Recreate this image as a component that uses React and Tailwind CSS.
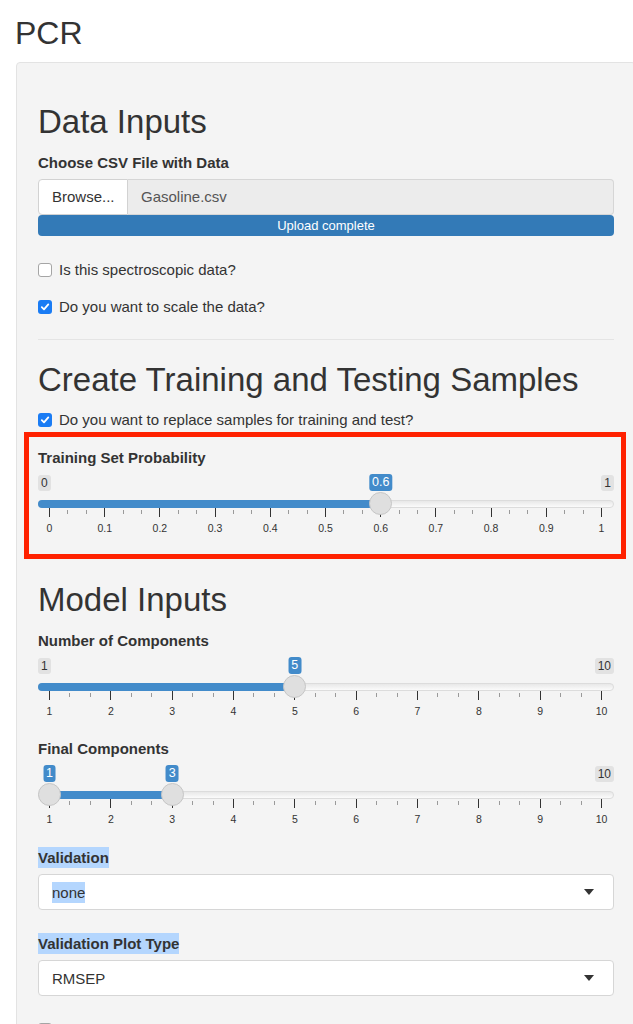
import React from 'react';

const probTicks = [0, 0.1, 0.2, 0.3, 0.4, 0.5, 0.6, 0.7, 0.8, 0.9, 1];
const compTicks = [1, 2, 3, 4, 5, 6, 7, 8, 9, 10];

const Checkbox = ({ checked, label }) => (
    <div className="flex items-start gap-[7px] h-[20px] leading-[20px] text-[15px]">
        {checked ? (
            <span className="mt-[3px] w-[14px] h-[14px] rounded-[3px] bg-[#1a7cf4] flex items-center justify-center shrink-0">
                <svg width="10" height="10" viewBox="0 0 10 10">
                    <path d="M1.8 5.2 L4 7.4 L8.3 2.4" fill="none" stroke="white" strokeWidth="1.8" strokeLinecap="round" strokeLinejoin="round" />
                </svg>
            </span>
        ) : (
            <span className="mt-[3px] w-[14px] h-[14px] rounded-[3px] bg-white border border-[#a5a5a5] shrink-0"></span>
        )}
        <span>{label}</span>
    </div>
);

const Label = ({ children, className = '' }) => (
    <div className={`font-bold text-[15px] leading-[20px] ${className}`}>{children}</div>
);

const Slider = ({ min, max, ticks, from, to, showMin = true, fmt = v => String(v) }) => {
    const pos = v => 11 + ((v - min) / (max - min)) * 552;
    const single = to === undefined;
    const fillStart = single ? 0 : pos(from);
    const fillEnd = single ? pos(from) : pos(to);
    const handles = single ? [from] : [from, to];

    const minors = [];
    for (let i = 0; i < ticks.length - 1; i++) {
        const a = pos(ticks[i]);
        const b = pos(ticks[i + 1]);
        minors.push(a + (b - a) / 3, a + (2 * (b - a)) / 3);
    }

    return (
        <div className="relative h-[60px] w-full">
            {showMin && (
                <span className="absolute left-0 top-0 h-[16px] px-[3px] rounded-[3px] bg-[#e2e2e2] text-[12px] leading-[16px] text-[#333]">
                    {fmt(min)}
                </span>
            )}
            <span className="absolute right-0 top-0 h-[16px] px-[3px] rounded-[3px] bg-[#e2e2e2] text-[12px] leading-[16px] text-[#333]">
                {fmt(max)}
            </span>

            {/* track */}
            <div className="absolute left-0 right-0 top-[25px] h-[8px] rounded-full border border-[#dcdcdc] bg-gradient-to-b from-[#e8e8e8] to-[#fbfbfb]"></div>
            <div
                className="absolute top-[25px] h-[8px] rounded-full bg-[#428bca]"
                style={{ left: fillStart, width: fillEnd - fillStart }}
            ></div>

            {/* grid */}
            {minors.map((x, i) => (
                <div key={'m' + i} className="absolute top-[35px] h-[4px] w-px bg-[#9a9a9a]" style={{ left: x }}></div>
            ))}
            {ticks.map(t => (
                <div key={'t' + t} className="absolute top-[33px] h-[9px] w-px bg-[#333]" style={{ left: pos(t) }}></div>
            ))}
            {ticks.map(t => (
                <span
                    key={'l' + t}
                    className="absolute top-[46px] w-[30px] -ml-[15px] text-center text-[10.5px] leading-[14px] text-[#333]"
                    style={{ left: pos(t) + 0.5 }}
                >
                    {fmt(t)}
                </span>
            ))}

            {/* handles */}
            {handles.map((v, i) => (
                <React.Fragment key={'h' + i}>
                    <span
                        className="absolute top-[-1px] h-[17px] px-[3px] rounded-[3px] bg-[#428bca] text-white text-[12.5px] leading-[17px] -translate-x-1/2"
                        style={{ left: pos(v) + 0.5 }}
                    >
                        {fmt(v)}
                    </span>
                    <span
                        className="absolute top-[17px] w-[23px] h-[23px] -ml-[11px] rounded-full bg-[#dfdfdf] border border-[#c6c6c6]"
                        style={{ left: pos(v) }}
                    ></span>
                </React.Fragment>
            ))}
        </div>
    );
};

const Select = ({ value, highlight }) => (
    <div className="mt-[6px] h-[36px] rounded-[4px] border border-[#d6d6d6] bg-white flex items-center justify-between pl-[13px] pr-[19px]">
        <span className={`text-[15px] leading-[21px] ${highlight ? 'bg-[#b4d6fe]' : ''}`}>{value}</span>
        <svg width="10" height="6" viewBox="0 0 10 6">
            <path d="M0 0 L10 0 L5 6 Z" fill="#333" />
        </svg>
    </div>
);

const App = () => {
    return (
        <div className="h-[1024px] w-full overflow-hidden bg-white text-[#333] font-['Liberation_Sans',Arial,sans-serif]">
            <div className="pl-[15px] pt-[15px]">
                <h2 className="text-[32px] leading-[36px] font-medium">PCR</h2>
            </div>
            <div className="ml-4 mt-[11px] w-[620px] rounded-[4px] border border-[#e3e3e3] bg-[#f4f4f4] pt-[41px] px-[21px] pb-6">
                <h1 className="text-[33px] leading-[36px] font-medium">Data Inputs</h1>
                <Label className="mt-[13px]">Choose CSV File with Data</Label>
                <div className="mt-[6px] flex h-[36px]">
                    <div className="w-[90px] flex items-center pl-[13px] bg-white border border-[#d2d2d2] rounded-tl-[4px] rounded-bl-[4px] text-[15px]">
                        Browse...
                    </div>
                    <div className="flex-1 flex items-center pl-[13px] bg-[#ececec] border border-l-0 border-[#d6d6d6] rounded-tr-[4px] rounded-br-[4px] text-[15px] text-[#555]">
                        Gasoline.csv
                    </div>
                </div>
                <div className="h-[21px] rounded-[4px] bg-[#337ab7] flex items-center justify-center text-white text-[13px]">
                    Upload complete
                </div>

                <div className="mt-[24px]">
                    <Checkbox checked={false} label="Is this spectroscopic data?" />
                </div>
                <div className="mt-[17px]">
                    <Checkbox checked label="Do you want to scale the data?" />
                </div>

                <hr className="mt-[22px] border-0 border-t border-[#e4e4e4]" />

                <h1 className="mt-[22px] text-[33px] leading-[36px] font-medium">Create Training and Testing Samples</h1>
                <div className="mt-[12px]">
                    <Checkbox checked label="Do you want to replace samples for training and test?" />
                </div>

                <div className="mt-[2px] -ml-[14px] -mr-[12px] border-[5px] border-[#ff2100] pl-[9px] pr-[7px] pt-[11px] pb-[19px]">
                    <Label>Training Set Probability</Label>
                    <div className="mt-[7px]">
                        <Slider min={0} max={1} ticks={probTicks} from={0.6} />
                    </div>
                </div>

                <h1 className="mt-[23px] text-[33px] leading-[36px] font-medium">Model Inputs</h1>
                <Label className="mt-[13px]">Number of Components</Label>
                <div className="mt-[7px]">
                    <Slider min={1} max={10} ticks={compTicks} from={5} />
                </div>

                <Label className="mt-[21px]">Final Components</Label>
                <div className="mt-[7px]">
                    <Slider min={1} max={10} ticks={compTicks} from={1} to={3} showMin={false} />
                </div>

                <div className="mt-[21px] flex">
                    <span className="font-bold text-[15px] leading-[21px] bg-[#b4d6fe]">Validation</span>
                </div>
                <Select value="none" highlight />

                <div className="mt-[23px] flex">
                    <span className="font-bold text-[15px] leading-[21px] bg-[#b4d6fe]">Validation Plot Type</span>
                </div>
                <Select value="RMSEP" />

                <div className="mt-[24px]">
                    <Checkbox checked={false} label="Do you want to plot the validation results?" />
                </div>
            </div>
        </div>
    );
};

export default App;
